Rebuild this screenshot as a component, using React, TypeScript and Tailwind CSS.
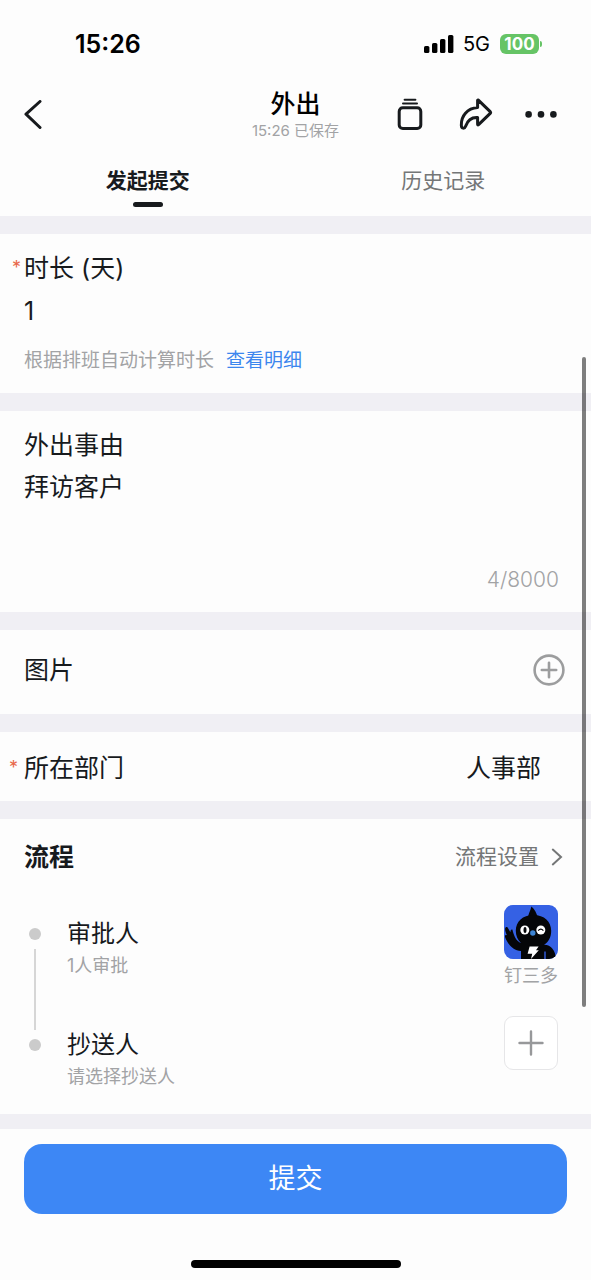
import React, { useState } from 'react';

const SignalIcon = () => (
  <svg width="30" height="20" viewBox="0 0 30 20" fill="currentColor" aria-hidden="true">
    <rect x="0" y="12" width="5.4" height="7" rx="1.6" />
    <rect x="8" y="9" width="5.4" height="10" rx="1.6" />
    <rect x="16" y="5" width="5.4" height="14" rx="1.6" />
    <rect x="24" y="1" width="5.4" height="18" rx="1.6" />
  </svg>
);

const BackIcon = () => (
  <svg width="18" height="30" viewBox="0 0 18 30" fill="none" stroke="currentColor" strokeWidth="3" strokeLinecap="round" strokeLinejoin="round">
    <path d="M16 1.5 2 14.2 16 27.5" />
  </svg>
);

const StackIcon = () => (
  <svg width="26" height="34" viewBox="0 0 26 34" fill="none" stroke="currentColor" strokeLinecap="round">
    <path d="M7.6 1.8h10.8M6 5.6h14" strokeWidth="2" />
    <rect x="2.2" y="9.8" width="21.6" height="20.8" rx="3.6" strokeWidth="3" />
  </svg>
);

const ShareIcon = () => (
  <svg width="34" height="34" viewBox="0 0 34 34" fill="none" stroke="currentColor" strokeWidth="3" strokeLinecap="round" strokeLinejoin="round">
    <path d="M18.6 2.2Q19 1.8 19.6 2.4L31.2 13.6Q32 14.6 31.2 15.4L19.6 26.6Q18.6 27.4 18.6 26.2V19.6C12.4 19.2 8.6 22.4 6.6 28.2 5.6 31 2.6 30.6 2.4 28 1.8 17.8 8.4 10.4 18.6 9.6Z" />
  </svg>
);

const MoreIcon = () => (
  <svg width="32" height="8" viewBox="0 0 32 8" fill="currentColor">
    <circle cx="3.6" cy="3.4" r="3.3" />
    <circle cx="16" cy="3.4" r="3.3" />
    <circle cx="28.4" cy="3.4" r="3.3" />
  </svg>
);

const AddCircleIcon = () => (
  <svg width="32" height="32" viewBox="0 0 32 32" fill="none" stroke="currentColor" strokeWidth="2.6" strokeLinecap="round">
    <circle cx="16" cy="16" r="14.4" />
    <path d="M16 8.8v14.4M8.8 16h14.4" />
  </svg>
);

const Avatar = () => (
  <svg className="rounded-[9px]" width="54" height="54" viewBox="0 0 54 54" role="img" aria-label="钉三多头像">
    <rect width="54" height="54" fill="#3561e4" />
    <g fill="#050608">
      <path d="M24 13C24 9 26.4 6 27.4 1.4 30.6 4.2 33 8 33.6 13Z" />
      <path d="M29.4 10C40.4 10 47.2 16.6 47.2 25.8 47.2 32.4 44.4 37.4 40 39.8 46.8 39.6 51.6 45.4 52 54H17V46C9 45.4 4.2 39.6 1.2 32.4.4 30 2 29.4 3.2 30.4 1.8 28 .8 25.4 1.2 23.2 1.8 21.4 3.4 21.8 4.2 23.4L6.4 27.2C6.4 25.2 7.2 24 8.4 24.6 9.2 28 10 30.6 11.4 33 12.8 35.4 14.8 37.2 17 38 13.6 35 11.8 30.8 11.8 25.8 11.8 16.6 18.6 10 29.4 10Z" />
    </g>
    <path d="M41 46.4V54" stroke="#3561e4" strokeWidth="1.4" />
    <circle cx="20.8" cy="25" r="4.5" fill="#fff" />
    <ellipse cx="21" cy="25" rx="1.5" ry="3" fill="#050608" />
    <circle cx="36.8" cy="25" r="4.5" fill="#fff" />
    <path d="M34.2 25.6Q36.8 22.8 39.4 25.6" fill="none" stroke="#050608" strokeWidth="1.2" />
    <circle cx="28.8" cy="28" r="2.7" fill="#3c83d2" />
    <path d="M25.6 41.4H34.6L32 45.2H34.8L27 54 28.2 48.8H23.6Z" fill="#fff" />
  </svg>
);

const Divider = () => <div className="h-[18px] bg-[#f0eff4]" />;

const tabs = ['发起提交', '历史记录'];

const App: React.FC = () => {
  const [activeTab, setActiveTab] = useState(0);
  const [days, setDays] = useState('1');
  const [reason, setReason] = useState('拜访客户');

  return (
    <div className="min-h-screen flex flex-col bg-[#fdfdfd] text-[#171a1d] font-[Inter,'Noto_Sans_CJK_SC',sans-serif]">
      <div className="h-[88px] pl-[75px] pr-[49px] flex items-center justify-between text-black">
        <span className="pt-[2px] text-[25px] font-semibold">15:26</span>
        <div className="flex items-center">
          <SignalIcon />
          <span className="ml-[9px] text-[20px]">5G</span>
          <span className="ml-[10px] w-[39px] h-5 rounded-md bg-[#66c466] text-white text-[17px] leading-5 font-bold text-center">100</span>
          <span className="ml-px w-[2px] h-[6px] rounded-r-full bg-[#66c466]" />
        </div>
      </div>

      <header className="grid grid-cols-[1fr_auto_1fr] items-center px-6 pb-[6px]">
        <button aria-label="返回" className="justify-self-start">
          <BackIcon />
        </button>
        <div className="text-center">
          <h1 className="text-[25px] leading-8 font-medium text-black">外出</h1>
          <p className="text-[15px] leading-[22px] text-[#a2a3a5]">15:26 已保存</p>
        </div>
        <div className="flex items-center justify-end pr-[10px]">
          <button aria-label="收纳"><StackIcon /></button>
          <button aria-label="分享" className="ml-9"><ShareIcon /></button>
          <button aria-label="更多" className="ml-8"><MoreIcon /></button>
        </div>
      </header>

      <nav className="flex">
        {tabs.map((tab, index) => (
          <button
            key={tab}
            className={`flex-1 flex flex-col items-center pt-[17px] pb-[9px] text-[21px] leading-8 ${
              activeTab === index ? 'font-bold' : 'text-[#747677]'
            }`}
            onClick={() => setActiveTab(index)}
          >
            {tab}
            <span className={`mt-[5px] w-[30px] h-[5px] rounded-full ${activeTab === index ? 'bg-[#171a1d]' : ''}`} />
          </button>
        ))}
      </nav>

      <main className="relative flex-1">
        <Divider />
        <section className="px-6 pt-[17px] pb-[18px]">
          <label htmlFor="days" className="relative block text-[25px] leading-[34px]">
            <span className="absolute -left-3 text-[18px] text-[#e8684a]">*</span>
            时长 (天)
          </label>
          <input
            id="days"
            className="block w-full mt-[10px] h-[34px] text-[25px] outline-none"
            value={days}
            onChange={(e) => setDays(e.target.value)}
          />
          <p className="mt-[18px] text-[19px] leading-7 text-[#a2a3a5]">
            根据排班自动计算时长
            <a href="#detail" className="ml-3 text-[#3c86ee]">查看明细</a>
          </p>
        </section>

        <Divider />
        <section className="px-6 pt-[17px] pb-[18px]">
          <label htmlFor="reason" className="block text-[25px] leading-[34px]">外出事由</label>
          <textarea
            id="reason"
            className="block w-full mt-2 h-24 text-[25px] leading-[34px] resize-none outline-none"
            maxLength={8000}
            value={reason}
            onChange={(e) => setReason(e.target.value)}
          />
          <p className="pr-2 text-[21px] leading-7 text-right font-light text-[#a2a3a5]">{reason.length}/8000</p>
        </section>

        <Divider />
        <section className="h-[84px] px-6 pb-[5px] flex items-center justify-between">
          <h2 className="text-[25px] leading-[34px]">图片</h2>
          <button aria-label="添加图片" className="mr-[2px] text-[#9c9d9e]">
            <AddCircleIcon />
          </button>
        </section>

        <Divider />
        <section className="h-[69px] pt-[2px] px-6 flex items-center justify-between text-[25px] leading-[34px]">
          <span id="department" className="relative">
            <span className="absolute -left-[15px] text-[18px] text-[#e8684a]">*</span>
            所在部门
          </span>
          <button aria-describedby="department" className="mr-[26px]">人事部</button>
        </section>

        <Divider />
        <section className="px-6 pt-[21px]">
          <div className="flex items-center justify-between">
            <h2 className="text-[25px] leading-[34px] font-bold">流程</h2>
            <button className="flex items-center mr-1 text-[21px] leading-[34px] text-[#747677]">
              流程设置
              <svg className="ml-3" width="12" height="18" viewBox="0 0 12 18" fill="none" stroke="currentColor" strokeWidth="2" strokeLinecap="round">
                <path d="M1.8 1.6 10 9 1.8 16.4" />
              </svg>
            </button>
          </div>

          <div className="mt-[31px] flex">
            <div className="ml-[5px] mr-[26px] pt-[23px] pb-[63px] flex flex-col items-center">
              <span className="size-3 rounded-full bg-[#cbcbcb]" />
              <span className="my-[9px] w-[2px] flex-1 bg-[#d6d6d6]" />
              <span className="size-3 rounded-full bg-[#cbcbcb]" />
            </div>
            <ol className="flex-1">
              <li className="flex justify-between pb-[28px]">
                <div className="pt-3">
                  <h3 className="text-[24px] leading-[34px]">审批人</h3>
                  <p className="text-[18px] leading-[30px] text-[#a2a3a5]">1人审批</p>
                </div>
                <figure className="mr-[9px] flex flex-col items-center">
                  <Avatar />
                  <figcaption className="mt-[5px] text-[18px] leading-6 text-[#a2a3a5]">钉三多</figcaption>
                </figure>
              </li>
              <li className="flex justify-between items-start pb-[22px]">
                <div className="pt-3">
                  <h3 className="text-[24px] leading-[34px]">抄送人</h3>
                  <p className="text-[18px] leading-[30px] text-[#a2a3a5]">请选择抄送人</p>
                </div>
                <button aria-label="添加抄送人" className="mr-[9px] size-[54px] flex items-center justify-center rounded-[9px] border border-[#e6e6e8] bg-white text-[#97989a]">
                  <svg width="26" height="26" viewBox="0 0 26 26" fill="none" stroke="currentColor" strokeWidth="2.4" strokeLinecap="round">
                    <path d="M13 1.5v23M1.5 13h23" />
                  </svg>
                </button>
              </li>
            </ol>
          </div>
        </section>
        <div className="h-[15px] bg-[#f0eff4]" />
        <div className="absolute right-[5px] top-[141px] bottom-[122px] w-1 rounded-full bg-black/50" />
      </main>

      <footer className="px-6 pt-[15px] pb-3">
        <button className="w-full h-[70px] rounded-[18px] bg-[#3d87f5] text-white text-[27px]">提交</button>
        <div className="mt-[46px] mx-auto w-[210px] h-2 rounded-full bg-black" />
      </footer>
    </div>
  );
};

export default App;
